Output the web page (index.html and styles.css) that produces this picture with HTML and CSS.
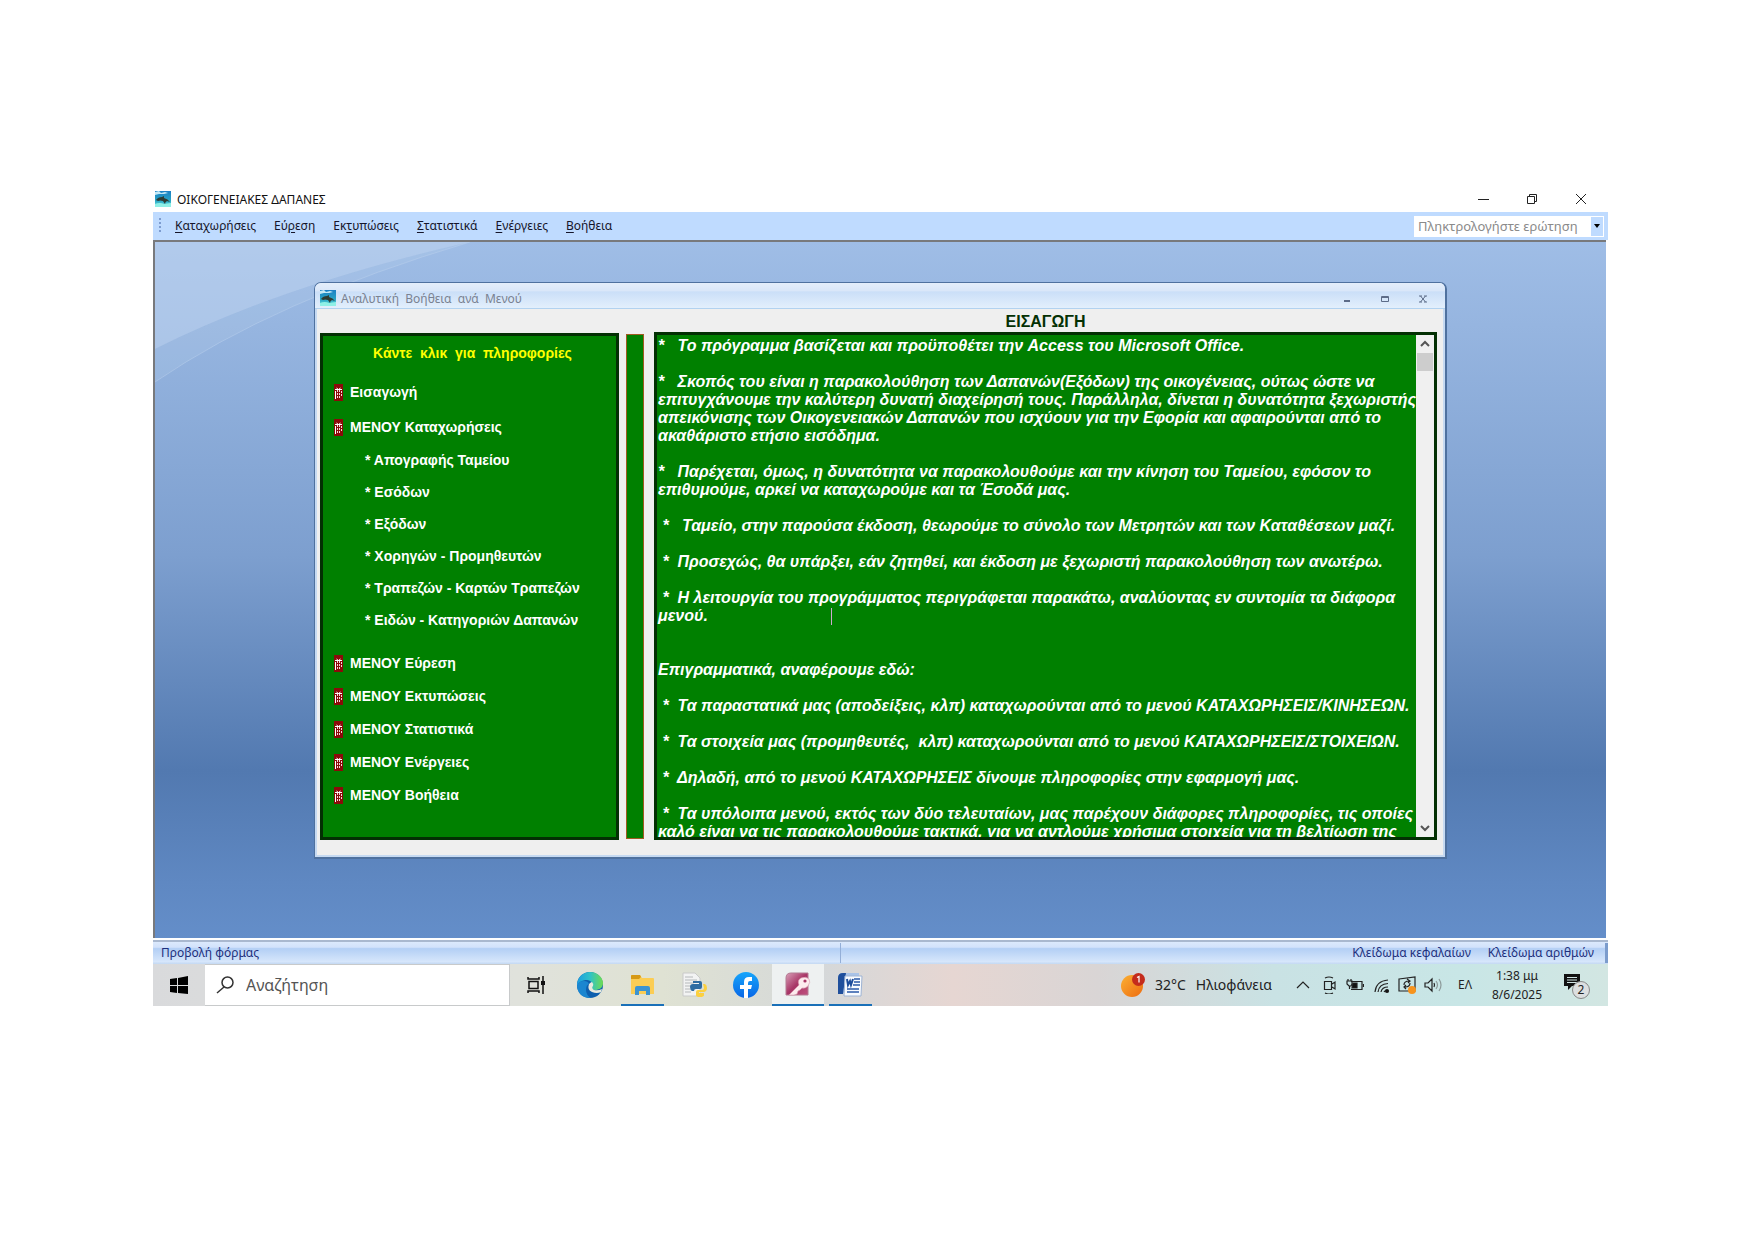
FILE: index.html
```html
<!DOCTYPE html>
<html lang="el">
<head>
<meta charset="utf-8">
<title>ΟΙΚΟΓΕΝΕΙΑΚΕΣ ΔΑΠΑΝΕΣ</title>
<link rel="stylesheet" href="styles.css">
</head>
<body>
<svg class="defs" width="0" height="0" aria-hidden="true">
  <defs>
    <linearGradient id="sky" x1="0" y1="0" x2="0" y2="1"><stop offset="0" stop-color="#1b7fc4"/><stop offset=".6" stop-color="#27a4c4"/><stop offset="1" stop-color="#6fe3e0"/></linearGradient>
    <linearGradient id="edgeTop" x1="0" y1="0" x2="1" y2="0"><stop offset="0" stop-color="#1b9de0"/><stop offset=".5" stop-color="#2fc2c8"/><stop offset="1" stop-color="#6fdc50"/></linearGradient>
    <linearGradient id="sun" x1="0" y1="0" x2="1" y2="1"><stop offset="0" stop-color="#fbb034"/><stop offset="1" stop-color="#ee6c10"/></linearGradient>
    <linearGradient id="fb" x1="0" y1="0" x2="0" y2="1"><stop offset="0" stop-color="#17a6fb"/><stop offset="1" stop-color="#0866e6"/></linearGradient>
    <linearGradient id="rose" x1="0" y1="0" x2="1" y2="1"><stop offset="0" stop-color="#d9a0b8"/><stop offset=".5" stop-color="#a83566"/><stop offset="1" stop-color="#c0527f"/></linearGradient>
    <symbol id="dolphin" viewBox="0 0 16 16">
      <rect width="16" height="16" fill="url(#sky)"/>
      <path d="M0 1l4-1 2 2 4-1 3 1-4 1-5 0-4 1z" fill="#c5e9f6"/>
      <path d="M0 13q5-2 9 0l7-1v4H0z" fill="#8ff0e6"/>
      <path d="M1 9q2-3 6-3l2-1v2q4 1 6 4l-3-1q-2 1-2 3l-2-3q-3-1-5 0z" fill="#2d3b33"/>
    </symbol>
    <symbol id="book" viewBox="0 0 9 17">
      <rect width="9" height="17" fill="#8b0a0a"/>
      <path d="M1 5.500h7M2.500 4l2 1.500L6.500 4" fill="none" stroke="#fff"/>
      <path d="M1.500 7v8" stroke="#fff" fill="none"/>
      <path d="M3.500 6v9M5.500 6v9M7.500 7v6" stroke="#f3dcdc" stroke-dasharray="2 1" fill="none"/>
    </symbol>
  </defs>
</svg>

<main class="app">
  <header class="titlebar">
    <svg class="app-icon" aria-hidden="true"><use href="#dolphin"/></svg>
    <h1 class="title">ΟΙΚΟΓΕΝΕΙΑΚΕΣ ΔΑΠΑΝΕΣ</h1>
    <div class="controls">
      <button aria-label="Ελαχιστοποίηση"><svg viewBox="0 0 12 12"><path d="M1 6.500h11"/></svg></button>
      <button aria-label="Επαναφορά"><svg viewBox="0 0 12 12"><path d="M1.500 3.500h7v7h-7zM3.500 3V1.500h7v7H9"/></svg></button>
      <button aria-label="Κλείσιμο"><svg viewBox="0 0 12 12"><path d="M1 1l10 10M11 1L1 11"/></svg></button>
    </div>
  </header>

  <nav class="menubar">
    <span class="grip"></span>
    <button><u>Κ</u>αταχωρήσεις</button>
    <button>Εύ<u>ρ</u>εση</button>
    <button>Εκ<u>τ</u>υπώσεις</button>
    <button><u>Σ</u>τατιστικά</button>
    <button><u>Ε</u>νέργειες</button>
    <button><u>Β</u>οήθεια</button>
    <div class="ask">
      <input type="text" placeholder="Πληκτρολογήστε ερώτηση" aria-label="Πληκτρολογήστε ερώτηση">
      <button aria-label="Άνοιγμα λίστας"><svg viewBox="0 0 6 4"><path d="M0 0h6L3 4z"/></svg></button>
    </div>
  </nav>

  <section class="desktop">
    <svg class="swoosh" viewBox="0 0 360 160" aria-hidden="true">
      <path d="M0 0H315Q130 42 0 107z" fill="#c3d8f1" fill-opacity=".5"/>
      <path d="M0 107Q130 42 315 0Q120 58 0 140z" fill="#c3d8f1" fill-opacity=".18"/>
      <path d="M0 140Q120 58 315 0" fill="none" stroke="#c3d8f1" stroke-opacity=".4"/>
    </svg>
    <article class="window">
      <header class="window-bar">
        <svg class="app-icon" aria-hidden="true"><use href="#dolphin"/></svg>
        <h2 class="window-title">Αναλυτική&nbsp; Βοήθεια&nbsp; ανά&nbsp; Μενού</h2>
        <div class="window-controls">
          <button aria-label="Ελαχιστοποίηση"><svg viewBox="0 0 8 8"><path d="M1 6h6" stroke-width="2"/></svg></button>
          <button aria-label="Μεγιστοποίηση"><svg viewBox="0 0 8 8"><path d="M.5 1.500h7v5h-7zM0 2.500h8"/></svg></button>
          <button aria-label="Κλείσιμο"><svg viewBox="0 0 8 8"><path d="M1.500 1l5 6M6.500 1l-5 6M0 1h3M5 1h3M0 7h3M5 7h3"/></svg></button>
        </div>
      </header>
      <div class="window-body">
        <nav class="topics">
          <h3 class="topics-title">Κάντε&nbsp; κλικ&nbsp; για&nbsp; πληροφορίες</h3>
          <a class="topic intro" href="#"><svg aria-hidden="true"><use href="#book"/></svg>Εισαγωγή</a>
          <a class="topic" href="#"><svg aria-hidden="true"><use href="#book"/></svg>ΜΕΝΟΥ Καταχωρήσεις</a>
          <div class="subtopics">
            <a href="#">* Απογραφής Ταμείου</a>
            <a href="#">* Εσόδων</a>
            <a href="#">* Εξόδων</a>
            <a href="#">* Χορηγών - Προμηθευτών</a>
            <a href="#">* Τραπεζών - Καρτών Τραπεζών</a>
            <a href="#">* Ειδών - Κατηγοριών Δαπανών</a>
          </div>
          <a class="topic" href="#"><svg aria-hidden="true"><use href="#book"/></svg>ΜΕΝΟΥ Εύρεση</a>
          <a class="topic" href="#"><svg aria-hidden="true"><use href="#book"/></svg>ΜΕΝΟΥ Εκτυπώσεις</a>
          <a class="topic" href="#"><svg aria-hidden="true"><use href="#book"/></svg>ΜΕΝΟΥ Στατιστικά</a>
          <a class="topic" href="#"><svg aria-hidden="true"><use href="#book"/></svg>ΜΕΝΟΥ Ενέργειες</a>
          <a class="topic" href="#"><svg aria-hidden="true"><use href="#book"/></svg>ΜΕΝΟΥ Βοήθεια</a>
        </nav>
        <div class="divider"></div>
        <div class="help">
          <label class="help-title" for="help-text">ΕΙΣΑΓΩΓΗ</label>
          <div class="memo">
            <textarea id="help-text" readonly>*   Το πρόγραμμα βασίζεται και προϋποθέτει την Access του Microsoft Office.

*   Σκοπός του είναι η παρακολούθηση των Δαπανών(Εξόδων) της οικογένειας, ούτως ώστε να
επιτυγχάνουμε την καλύτερη δυνατή διαχείρησή τους. Παράλληλα, δίνεται η δυνατότητα ξεχωριστής
απεικόνισης των Οικογενειακών Δαπανών που ισχύουν για την Εφορία και αφαιρούνται από το
ακαθάριστο ετήσιο εισόδημα.

*   Παρέχεται, όμως, η δυνατότητα να παρακολουθούμε και την κίνηση του Ταμείου, εφόσον το
επιθυμούμε, αρκεί να καταχωρούμε και τα Έσοδά μας.

 *   Ταμείο, στην παρούσα έκδοση, θεωρούμε το σύνολο των Μετρητών και των Καταθέσεων μαζί.

 *  Προσεχώς, θα υπάρξει, εάν ζητηθεί, και έκδοση με ξεχωριστή παρακολούθηση των ανωτέρω.

 *  Η λειτουργία του προγράμματος περιγράφεται παρακάτω, αναλύοντας εν συντομία τα διάφορα
μενού.


Επιγραμματικά, αναφέρουμε εδώ:

 *  Τα παραστατικά μας (αποδείξεις, κλπ) καταχωρούνται από το μενού ΚΑΤΑΧΩΡΗΣΕΙΣ/ΚΙΝΗΣΕΩΝ.

 *  Τα στοιχεία μας (προμηθευτές,  κλπ) καταχωρούνται από το μενού ΚΑΤΑΧΩΡΗΣΕΙΣ/ΣΤΟΙΧΕΙΩΝ.

 *  Δηλαδή, από το μενού ΚΑΤΑΧΩΡΗΣΕΙΣ δίνουμε πληροφορίες στην εφαρμογή μας.

 *  Τα υπόλοιπα μενού, εκτός των δύο τελευταίων, μας παρέχουν διάφορες πληροφορίες, τις οποίες
καλό είναι να τις παρακολουθούμε τακτικά, για να αντλούμε χρήσιμα στοιχεία για τη βελτίωση της</textarea>
            <span class="caret"></span>
            <div class="scrollbar">
              <button aria-label="Κύλιση επάνω"><svg viewBox="0 0 10 8"><path d="M1 6l4-4 4 4"/></svg></button>
              <span class="thumb"></span>
              <button aria-label="Κύλιση κάτω"><svg viewBox="0 0 10 8"><path d="M1 2l4 4 4-4"/></svg></button>
            </div>
          </div>
        </div>
      </div>
    </article>
  </section>

  <footer class="status">
    <span class="status-view">Προβολή φόρμας</span>
    <div class="status-keys"><span>Κλείδωμα κεφαλαίων</span><span>Κλείδωμα αριθμών</span></div>
  </footer>

  <div class="taskbar">
    <button class="start" aria-label="Έναρξη"><svg viewBox="0 0 18 18"><path d="M0 3l7-1v7H0zM8 2l10-2v9H8zM0 10h7v7l-7-1zM8 10h10v8L8 17z"/></svg></button>
    <label class="search">
      <svg viewBox="0 0 18 18"><circle cx="11.500" cy="6.500" r="5.500"/><path d="M8 11l-7 6"/></svg>
      <input type="text" placeholder="Αναζήτηση" aria-label="Αναζήτηση">
    </label>
    <div class="pinned">
      <button class="task-view" aria-label="Προβολή εργασιών"><svg class="small" viewBox="0 0 18 18"><g fill="none" stroke="#111" stroke-width="1.500"><path d="M1 1v2h11V1M1 17v-2h11v2M2 5.500h9v7H2zM16 0v18"/></g><path d="M14 5h4v4h-4z" fill="#111"/></svg></button>
      <button aria-label="Edge"><svg viewBox="0 0 26 26"><circle cx="13" cy="13" r="13" fill="#0e5fae"/><path d="M0 12C1 4 7 0 13 0c8 0 13 6 13 11 0 5-4 7-8 7-2 0-4-1-3-3 2-3-1-7-5-7-5 0-9 2-10 7z" fill="url(#edgeTop)"/><path d="M0 14q1-5 7-5 4 0 5 3-3 1-3 6 0 5 5 8Q1 26 0 14z" fill="#1b86d0"/><path d="M12 12q-2 6 3 8 5 2 9 0l1-3q-4 2-8 1-3-2-1-4 1-2-1-4-1 0-3 2z" fill="#e7e9df"/></svg></button>
      <button class="open" aria-label="Εξερεύνηση αρχείων"><svg viewBox="0 0 26 26"><path d="M2 4q0-1 1-1h8l2 3h11q1 0 1 1v15H2z" fill="#fbcd54"/><path d="M2 4q0-1 1-1h8l1 2-2 2H2z" fill="#d69a16"/><path d="M6 23v-7q0-2 2-2h11q2 0 2 2v7h-4v-4h-7v4z" fill="#3d94d0"/></svg></button>
      <button aria-label="Python"><svg viewBox="0 0 26 26"><path d="M2 1h12l5 5v18H2z" fill="#f2f3f3" stroke="#c9caca"/><path d="M4 5h8M4 8h12M4 11h9M4 14h6M4 17h5M4 20h6" stroke="#b5b8ba"/><path d="M14 9h5q2 0 2 2v4q0 2-2 2h-4q-2 0-2 2h-2q-2-1-2-4 0-3 3-3h6v-1h-6q0-2 0-2z" fill="#2f6ca3"/><path d="M22 12h2q2 1 2 4t-3 4h-5v1h5v2q0 2-4 2t-4-2v-3q0-2 2-2h4q2 0 2-2z" fill="#fbd040"/></svg></button>
      <button aria-label="Facebook"><svg viewBox="0 0 26 26"><circle cx="13" cy="13" r="13" fill="url(#fb)"/><path d="M11 26v-9H7v-4h4v-3q0-5 5-5h3v4h-2q-2 0-2 2v2h4l-1 4h-3v9z" fill="#fff"/></svg></button>
      <button class="open active" aria-label="Access"><svg viewBox="0 0 26 26"><path d="M1 6q0-5 5-5h17v22H1z" fill="url(#rose)" stroke="#b37a92"/><path d="M4 23l10-10q-2-5 2-7 5-2 8 1 2 3-1 7-3 3-6 2l-2 2-2 1-1 3-3 1z" fill="#fdebee" stroke="#d99cae" stroke-width=".6"/><circle cx="20" cy="9" r="1.600" fill="#a83566"/></svg></button>
      <button class="open" aria-label="Word"><svg viewBox="0 0 26 26"><path d="M1 6q0-5 5-5h16v20H1z" fill="#a9c3e8"/><path d="M1 6q0-5 5-5h3L6 22H1z" fill="#1f4f9c"/><path d="M8 4h17l-1 20H7z" fill="#f8fbff" stroke="#9fb4d4"/><path d="M10 7l1 6 2-4 1 4 2-6" fill="none" stroke="#1d4d9b" stroke-width="2"/><path d="M17 7h6M17 10h6M16 13h7M10 17h12M10 20h12" stroke="#2a5aa8" stroke-width="1.500"/></svg></button>
    </div>
    <div class="tray">
      <button class="weather">
        <svg viewBox="0 0 24 24"><circle cx="11" cy="13" r="11" fill="url(#sun)"/><circle cx="17.500" cy="6.500" r="6.500" fill="#c42b1c"/><path d="M16 4.500l2-1v6" fill="none" stroke="#fff" stroke-width="1.200"/></svg>
        <span>32°C</span><span>Ηλιοφάνεια</span>
      </button>
      <div class="tray-icons">
        <button aria-label="Κρυφά εικονίδια"><svg viewBox="0 0 18 18"><path d="M3 12l6-6 6 6"/></svg></button>
        <button aria-label="Σύσκεψη"><svg viewBox="0 0 18 18"><path d="M4.500 5.500h7v8h-7zM12 8l3-2v7l-3-2M5 2q4-2 8 0M5 17q4 2 8 0"/></svg></button>
        <button aria-label="Μπαταρία"><svg viewBox="0 0 18 18"><path d="M5 5.500h11v8H5M17.500 8v3M1 5h5v3l-1 2H3L1 8zM2 3v2M5 3v2M3.500 10v3"/><path d="M7 7h4v5H6z" fill="#111"/></svg></button>
        <button aria-label="Wi-Fi"><svg viewBox="0 0 18 18"><path d="M3 16Q4 5 16 4M6 16Q7 8 16 7.500M9 16q1-5 7-5M12 16q1-2 4-2"/><circle cx="15" cy="15" r="1.500" fill="#111"/></svg></button>
        <button aria-label="Ενημερώσεις"><svg viewBox="0 0 18 18"><path d="M1 3l16-2v14H1zM6 9q0-4 5-4M9 3l3 2-2 2M12 7q0 4-5 4M8 9l-2 2 2 2"/><circle cx="14" cy="14" r="4" fill="#f7941d" stroke="none"/></svg></button>
        <button aria-label="Ένταση"><svg viewBox="0 0 18 18"><path d="M1 7h3l4-4v12l-4-4H1zM10 7q1 2 0 4"/><path d="M12 5q3 4 0 8M15 3q4 6 0 12" stroke="#8d9a9a"/></svg></button>
      </div>
      <button class="lang">ΕΛ</button>
      <button class="clock"><span>1:38 μμ</span><span>8/6/2025</span></button>
      <button class="notice" aria-label="Ειδοποιήσεις"><svg viewBox="0 0 26 26"><path d="M1 2h16v12H9l-4 4v-4H1z" fill="#111"/><path d="M4 5.500h10M4 8h10M4 10.500h10" stroke="#d0e4e4"/></svg><span class="badge">2</span></button>
    </div>
  </div>
</main>
</body>
</html>
```
FILE: styles.css
```css
* { box-sizing: border-box; }

body {
  margin: 0;
  padding: 187px 147px 0 153px;
  background: #fff;
  color: #111;
  font: 12px/20px "Noto Sans", sans-serif;
}

h1, h2, h3 { margin: 0; font-weight: 400; }

button {
  margin: 0;
  padding: 0;
  border: 0;
  background: none;
  color: inherit;
  font: inherit;
}

input { border: 0; padding: 0; min-width: 0; font: inherit; background: #fff; }
svg { display: block; }
.defs { position: absolute; }
.app { display: flex; flex-direction: column; }

/* Application frame */
.titlebar { display: flex; align-items: center; height: 25px; padding: 0 21px 2px 2px; }
.app-icon { width: 16px; height: 16px; flex: none; }
.title { margin: 3px auto 0 6px; font-size: 12px; }
.controls { display: flex; gap: 37px; }
.controls svg { width: 12px; height: 12px; fill: none; stroke: #222; }

.menubar {
  display: flex;
  align-items: center;
  gap: 18px;
  height: 28px;
  padding: 0 4px 0 6px;
  background: #bfdbff;
  color: #15152a;
}
.menubar u { text-underline-offset: 2px; }
.grip { width: 2px; height: 16px; margin-right: -4px; background: repeating-linear-gradient(#7d9cd0 0 2px, #bfdbff 2px 4px); }
.ask { display: flex; align-items: center; width: 190px; height: 21px; margin-left: auto; background: #fff; font-size: 13px; }
.ask input { flex: 1; padding-left: 4px; height: 21px; }
.ask input::placeholder { color: #8a8a8a; opacity: 1; }
.ask button { width: 12px; height: 19px; margin-right: 1px; background: #bfdbff; display: grid; place-items: center; }
.ask svg { width: 6px; height: 4px; }

.desktop {
  position: relative;
  margin-right: 2px;
  padding: 40px 159px 79px;
  border: 2px solid #78797c;
  border-width: 2px 0 0 2px;
  background: linear-gradient(#9fbde6 0, #7d9fcf 45%, #5279b0 76%, #5f88c2 92%, #648ec9 100%);
}
.swoosh { position: absolute; left: 0; top: 0; width: 360px; height: 160px; }

/* Help window */
.window {
  position: relative;
  border: 2px solid #4f719f;
  border-width: 1px 2px 2px 1px;
  border-radius: 7px 7px 0 0;
  background: #c6daf2;
  overflow: hidden;
}
.window-bar {
  display: flex;
  align-items: center;
  height: 26px;
  padding: 4px 18px 0 5px;
  border-bottom: 1px solid #b2d2f0;
  background: linear-gradient(#e4eefb 0, #dae7f9 30%, #cbdff8 36%, #e3effc 100%);
}
.window-title { margin: 2px auto 0 5px; color: #7a8291; font-size: 12px; }
.window-controls { display: flex; gap: 30px; padding-top: 2px; }
.window-controls svg { width: 8px; height: 8px; fill: none; stroke: #5d6c88; }
.window-body {
  display: grid;
  grid-template-columns: 299px 18px 1fr;
  align-items: end;
  margin: 0 2px 2px;
  padding: 0 6px 15px 3px;
  background: #efefef;
}
.topics {
  height: 507px;
  padding: 7px 11px;
  border: 3px solid #033003;
  background: #008000;
  color: #fff;
  font: bold 14px/33px "Liberation Sans", sans-serif;
}
.topics a { color: inherit; text-decoration: none; }
.topics-title { margin-bottom: 13px; padding-left: 6px; color: #ff0; font: inherit; line-height: 20px; text-align: center; }
.topic { display: flex; align-items: center; gap: 7px; }
.topic svg { width: 9px; height: 17px; }
.intro { margin-bottom: 2px; }
.subtopics { display: flex; flex-direction: column; margin-bottom: 11px; padding-left: 31px; line-height: 32px; }
.divider { height: 505px; margin: 0 0 1px 7px; width: 18px; border: 1px solid #a05a20; background: #008000; }
.help { margin-left: 17px; }
.help-title { display: block; padding-top: 2px; color: #033003; font: bold 16px/21px "Liberation Sans", sans-serif; text-align: center; }
.memo { position: relative; display: flex; height: 508px; border: 3px solid #033003; background: #008000; }
.memo textarea {
  flex: 1;
  min-width: 0;
  margin: 0;
  padding: 2px 0 0 1px;
  border: 0;
  outline: 0;
  resize: none;
  overflow: hidden;
  background: #008000;
  color: #fff;
  font: italic bold 16px/18px "Liberation Sans", sans-serif;
  white-space: pre;
}
.caret { position: absolute; left: 174px; top: 273px; width: 1px; height: 17px; background: #d0a8d0; }
.scrollbar { display: flex; flex-direction: column; flex: none; width: 18px; background: #f0f0f0; }
.scrollbar button { display: grid; place-items: center; height: 18px; }
.scrollbar button:last-child { margin-top: auto; }
.scrollbar svg { width: 10px; height: 8px; fill: none; stroke: #555; stroke-width: 2; }
.thumb { height: 18px; margin: 0 1px; background: #cdcdcd; }

/* Status line */
.status {
  display: flex;
  align-items: center;
  height: 26px;
  padding: 1px 0 0 8px;
  border-top: 2px solid #fff;
  box-shadow: inset 0 2px #a9b8cf;
  background: linear-gradient(#dfecfd 0, #d2e2fb 30%, #b3cff5 36%, #d6e6fb 90%, #c3d8f2 100%);
  color: #1d2f7c;
}
.status-view { flex: 0 0 680px; border-right: 1px solid #94afd8; }
.status-keys { display: flex; gap: 17px; margin-left: auto; padding-right: 11px; border-right: 3px solid #7c9ccc; }

/* Taskbar */
.taskbar {
  display: flex;
  height: 42px;
  background: linear-gradient(90deg, #d9dadc 0, #e0e2dc 25%, #dfe2d3 35%, #d5d8d9 46%, #e6d6d2 55%, #d9d5d5 65%, #c9e2e4 77%, #c8e6e6 90%, #d2e6e2 100%);
  color: #222;
}
.start { width: 52px; display: grid; place-items: center; }
.start svg { width: 18px; height: 18px; }
.search { display: flex; align-items: center; gap: 12px; width: 305px; padding-left: 11px; border: 1px solid #c8cacb; border-left: 0; background: #fff; }
.search svg { width: 18px; height: 18px; fill: none; stroke: #333; stroke-width: 1.5; }
.search input { flex: 1; font-size: 16px; }
.search input::placeholder { color: #555; opacity: 1; }
.pinned { display: flex; }
.pinned button { display: grid; place-items: center; width: 52px; height: 42px; }
.pinned .task-view { margin-right: 2px; }
.pinned svg { width: 26px; height: 26px; }
.pinned .small { width: 18px; height: 18px; }
.pinned .open { background: linear-gradient(#1a70b8, #1a70b8) center bottom / 43px 2px no-repeat; }
.pinned .active { background: linear-gradient(#eef1f1 40px, #1a70b8 40px); }
.tray { display: flex; align-items: center; margin-left: auto; padding-right: 19px; }
.weather { display: flex; align-items: center; gap: 10px; margin-right: 22px; font-size: 14px; }
.weather svg { width: 24px; height: 24px; }
.tray-icons { display: flex; gap: 8px; }
.tray-icons svg { width: 18px; height: 18px; fill: none; stroke: #222; stroke-width: 1.2; }
.lang { margin-left: 16px; }
.clock { display: flex; flex-direction: column; width: 52px; margin-left: 19px; line-height: 19px; white-space: nowrap; align-items: center; }
.notice { position: relative; width: 26px; height: 26px; margin-left: 20px; }
.notice svg { width: 26px; height: 26px; }
.badge { position: absolute; left: 9px; top: 9px; width: 18px; height: 18px; border: 1px solid #888; border-radius: 50%; background: #dcdfe0; line-height: 16px; text-align: center; }
```
